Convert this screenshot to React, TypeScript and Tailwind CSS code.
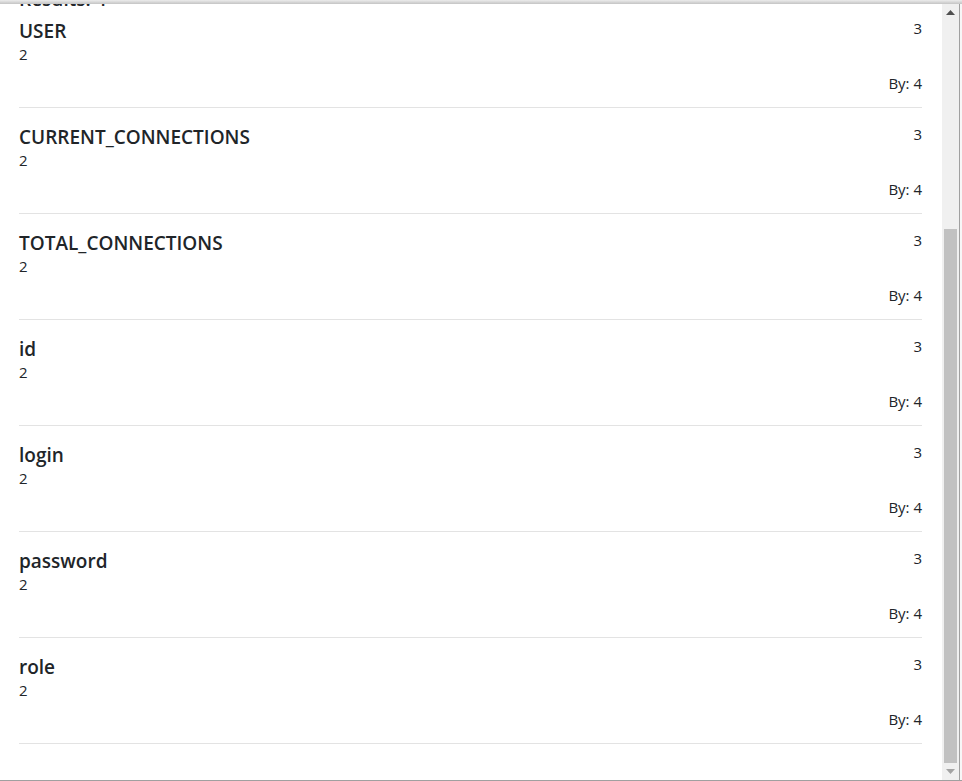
import React from "react";

interface Row {
  name: string;
  type: string;
  size: string;
  by: string;
}

const rows: Row[] = [
  { name: "USER", type: "2", size: "3", by: "4" },
  { name: "CURRENT_CONNECTIONS", type: "2", size: "3", by: "4" },
  { name: "TOTAL_CONNECTIONS", type: "2", size: "3", by: "4" },
  { name: "id", type: "2", size: "3", by: "4" },
  { name: "login", type: "2", size: "3", by: "4" },
  { name: "password", type: "2", size: "3", by: "4" },
  { name: "role", type: "2", size: "3", by: "4" },
];

function ResultRow({ row }: { row: Row }) {
  return (
    <div className="flex justify-between h-[106px] pt-4 border-b border-[#e3e3e3]">
      <div className="flex flex-col">
        <span className="text-[19px] leading-[26px] font-semibold">{row.name}</span>
        <span className="text-[15px] leading-[20px]">{row.type}</span>
      </div>
      <div className="flex flex-col items-end">
        <span className="text-[15px] leading-[20px]">{row.size}</span>
        <span className="text-[15px] leading-[20px] mt-[35px]">By: {row.by}</span>
      </div>
    </div>
  );
}

function Scrollbar() {
  return (
    <div className="w-[17px] bg-[#f0f0f0] flex flex-col items-center">
      <div className="h-[17px] w-full flex items-center justify-center">
        <svg width="9" height="5" viewBox="0 0 9 5">
          <path d="M0 5 L4.5 0 L9 5 Z" fill="#505050" />
        </svg>
      </div>
      <div className="flex-1" />
      <div className="h-[534px] w-[13px] bg-[#c1c1c1]" />
      <div className="h-[17px] w-full flex items-center justify-center">
        <svg width="9" height="5" viewBox="0 0 9 5">
          <path d="M0 0 L9 0 L4.5 5 Z" fill="#a3a3a3" />
        </svg>
      </div>
    </div>
  );
}

export default function App() {
  return (
    <div
      className="w-[962px] h-[781px] flex flex-col bg-white text-[#212529] overflow-hidden"
      style={{ fontFamily: '"Open Sans", "Noto Sans", sans-serif' }}
    >
      <div className="h-[4px] bg-gradient-to-b from-[#ececec] to-[#c4c4c4]" />
      <div className="flex flex-1 min-h-0">
        <div className="flex-1 overflow-hidden pl-[19px] pr-[20px]">
          <div className="-mt-[15px]">
            <div className="text-[19px] leading-[20px] font-semibold mb-[-7px]">Results: 4</div>
            {rows.map((row) => (
              <ResultRow key={row.name} row={row} />
            ))}
          </div>
        </div>
        <Scrollbar />
        <div className="w-px bg-[#a0a0a0]" />
        <div className="w-[2px] bg-[#f7f7f7]" />
      </div>
      <div className="h-px bg-[#a0a0a0]" />
    </div>
  );
}
